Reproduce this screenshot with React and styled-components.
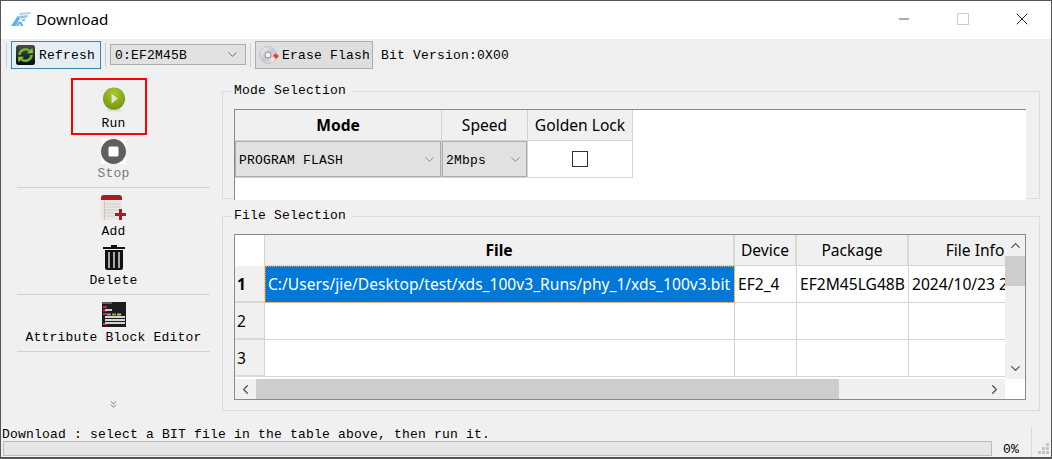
import React from "react";
import styled, { createGlobalStyle } from "styled-components";
import { ChevronDown, ChevronUp, ChevronLeft, ChevronRight, ChevronsDown, Minus, X } from "lucide-react";

const GlobalStyle = createGlobalStyle`
html, body {
  margin: 0;
  padding: 0;
  overflow: hidden;
}
* {
  box-sizing: border-box;
}
`

const MONO = `"Liberation Mono", "DejaVu Sans Mono", monospace`
const UI = `"Noto Sans", "Open Sans", sans-serif`

const Logo = () => (
  <svg width="20" height="14" viewBox="0 0 20 14">
    <path d="M9 1 L20 0 L18.5 2 L8 3 Z" fill="#9fd2f5" />
    <path d="M8 4 L17.5 3 L16 5.5 L9.5 6.5 Z" fill="#8ac6f0" />
    <path d="M10.5 7.5 L15 6.5 L13.5 9 L11.5 9.5 Z" fill="#7fbfee" />
    <path d="M0 14 L7 3.5 L9 6.5 L4.5 14 Z" fill="#5fb0e8" />
    <path d="M5 14 L7.5 10 L10 9.5 L12.5 14 L10 14 L8.5 11.5 L7.5 14 Z" fill="#5fb0e8" />
  </svg>
)

const RefreshIcon = () => (
  <svg width="19" height="20" viewBox="0 0 19 20">
    <defs>
      <linearGradient id="refreshBg" x1="0" y1="0" x2="0" y2="1">
        <stop offset="0" stopColor="#4b4b4b" />
        <stop offset="1" stopColor="#0c0c0c" />
      </linearGradient>
    </defs>
    <rect width="19" height="20" rx="2.5" fill="url(#refreshBg)" />
    <path d="M3.5 10 A6 6 0 0 1 13.5 5.8" fill="none" stroke="#69b52e" strokeWidth="2.6" />
    <path d="M15.5 10 A6 6 0 0 1 5.5 14.2" fill="none" stroke="#69b52e" strokeWidth="2.6" />
    <path d="M11 8.3 L17 8.3 L16.5 2.8 Z" fill="#82c83a" />
    <path d="M8 11.7 L2 11.7 L2.5 17.2 Z" fill="#82c83a" />
  </svg>
)

const EraseIcon = () => (
  <svg width="20" height="20" viewBox="0 0 20 20">
    <defs>
      <linearGradient id="disc" x1="0" y1="0" x2="1" y2="1">
        <stop offset="0" stopColor="#f6f6f6" />
        <stop offset="0.5" stopColor="#c9c6d2" />
        <stop offset="1" stopColor="#ececec" />
      </linearGradient>
    </defs>
    <circle cx="9" cy="10" r="8.5" fill="url(#disc)" stroke="#c4c4c4" />
    <circle cx="9" cy="10" r="3" fill="#f2f2f2" stroke="#8f8f8f" />
    <path d="M11.5 13.5 L16.5 8 L20 11 L15 16.5 Z" fill="#e2452f" />
    <path d="M11.5 13.5 L14 11 L17 14 L15 16.5 L13 16.5 Z" fill="#f7e9e2" />
  </svg>
)

const RunIcon = () => (
  <svg width="24" height="28" viewBox="0 0 24 28">
    <defs>
      <radialGradient id="run" cx="0.5" cy="0.25" r="0.8">
        <stop offset="0" stopColor="#a9c72f" />
        <stop offset="1" stopColor="#6d9312" />
      </radialGradient>
    </defs>
    <ellipse cx="12" cy="24" rx="8" ry="1.5" fill="#d9d9d9" />
    <circle cx="12" cy="12" r="11.5" fill="url(#run)" />
    <path d="M9.5 7 L16 12 L9.5 17 Z" fill="#e4e8c8" />
  </svg>
)

const StopIcon = () => (
  <svg width="25" height="25" viewBox="0 0 25 25">
    <rect width="25" height="25" fill="#fff" />
    <circle cx="12.5" cy="12.5" r="12.5" fill="#5f5f5f" />
    <rect x="7.5" y="7.5" width="10" height="10" rx="1.5" fill="#fff" />
  </svg>
)

const AddIcon = () => (
  <svg width="25" height="27" viewBox="0 0 25 27">
    <rect x="0" y="0" width="21" height="25" rx="3" fill="#e9e7e4" />
    <path d="M0 5 V3 A3 3 0 0 1 3 0 H18 A3 3 0 0 1 21 3 V5 Z" fill="#a81b22" />
    <path d="M3 9 H19 M3 12 H19 M3 15 H19 M3 18 H14 M3 21 H14" stroke="#cfcdca" strokeWidth="1" />
    <path d="M3.5 5 V25" stroke="#e6b9bb" strokeWidth="1" />
    <path d="M14 19.5 H25 M19.5 14 V25" stroke="#a81b22" strokeWidth="3" />
  </svg>
)

const TrashIcon = () => (
  <svg width="22" height="26" viewBox="0 0 22 26">
    <path d="M8 0 H14 V2 H8 Z M0 2 H22 V4 H0 Z" fill="#111" />
    <path d="M2 5 H20 V22.5 A2.5 2.5 0 0 1 17.5 25 H4.5 A2.5 2.5 0 0 1 2 22.5 Z" fill="#111" />
    <path d="M6 7 V23 M11 7 V23 M16 7 V23" stroke="#dcdcdc" strokeWidth="1.5" />
  </svg>
)

const AttributeIcon = () => (
  <svg width="24" height="26" viewBox="0 0 24 26">
    <rect width="24" height="25" fill="#1d1d1d" />
    <rect width="10" height="2" fill="#5c5c5c" />
    <path d="M1 5 H5 M1 8.5 H5 M1 12 H5 M1 22 H5" stroke="#d81b6a" strokeWidth="2" />
    <rect x="3" y="7" width="7" height="2" fill="#c9c9c9" />
    <rect x="5" y="11.5" width="4" height="2" fill="#9c9c9c" />
    <rect x="10" y="11.5" width="4" height="2" fill="#78b83a" />
    <rect x="15" y="11.5" width="4" height="2" fill="#c9c64e" />
    <path d="M3 15 H23 M3 18 H23 M3 21 H23" stroke="#d4d4d4" strokeWidth="2" />
  </svg>
)

const Grip = () => (
  <svg width="12" height="12" viewBox="0 0 12 12" fill="#c4c4c4">
    <rect x="8" y="0" width="3" height="3" />
    <rect x="4" y="4" width="3" height="3" />
    <rect x="8" y="4" width="3" height="3" />
    <rect x="0" y="8" width="3" height="3" />
    <rect x="4" y="8" width="3" height="3" />
    <rect x="8" y="8" width="3" height="3" />
  </svg>
)

const sideItems = [
  { label: "Run", icon: <RunIcon />, marked: true },
  { label: "Stop", icon: <StopIcon />, off: true, line: true },
  { label: "Add", icon: <AddIcon /> },
  { label: "Delete", icon: <TrashIcon />, line: true },
  { label: "Attribute Block Editor", icon: <AttributeIcon />, line: true },
]

export default function App() {
  return (
    <Window>
      <GlobalStyle />
      <TitleBar>
        <Logo />
        <TitleText>Download</TitleText>
        <WindowButtons>
          <WindowButton><Minus size={16} strokeWidth={1} color="#000" /></WindowButton>
          <WindowButton><MaxBox /></WindowButton>
          <WindowButton><X size={20} strokeWidth={1} color="#000" /></WindowButton>
        </WindowButtons>
      </TitleBar>

      <Toolbar>
        <ToolSep />
        <ToolButton $hover><RefreshIcon /><ToolText>Refresh</ToolText></ToolButton>
        <ToolSep />
        <DeviceCombo><ToolText>0:EF2M45B</ToolText><ChevronDown size={15} strokeWidth={1} color="#333" /></DeviceCombo>
        <ToolSep />
        <ToolButton><EraseIcon /><ToolText>Erase Flash</ToolText></ToolButton>
        <BitVersion>Bit Version:0X00</BitVersion>
      </Toolbar>

      <Main>
        <Sidebar>
          {sideItems.map((item) => (
            <React.Fragment key={item.label}>
              <SideButton $marked={item.marked} $off={item.off}>
                {item.icon}
                <span>{item.label}</span>
              </SideButton>
              {item.line && <SideLine />}
            </React.Fragment>
          ))}
          <MoreArrow><ChevronsDown size={11} strokeWidth={1.5} color="#444" /></MoreArrow>
        </Sidebar>

        <Content>
          <ModeGroup>
            <Legend>Mode Selection</Legend>
            <ModeFrame>
              <ModeTable>
                <ModeHead $w={207} $bold>Mode</ModeHead>
                <ModeHead $w={86}>Speed</ModeHead>
                <ModeHead $w={105}>Golden Lock</ModeHead>
                <ModeCell $w={207}>
                  <CellCombo><ToolText>PROGRAM FLASH</ToolText><ChevronDown size={15} strokeWidth={1} color="#555" /></CellCombo>
                </ModeCell>
                <ModeCell $w={86}>
                  <CellCombo><ToolText>2Mbps</ToolText><ChevronDown size={15} strokeWidth={1} color="#555" /></CellCombo>
                </ModeCell>
                <ModeCell $w={105} $center><CheckBox /></ModeCell>
              </ModeTable>
            </ModeFrame>
          </ModeGroup>

          <FileGroup>
            <Legend>File Selection</Legend>
            <FileFrame>
              <FileBody>
                <FileGrid>
                  <Corner />
                  <FileHead $bold>File</FileHead>
                  <FileHead>Device</FileHead>
                  <FileHead>Package</FileHead>
                  <FileHead>File Info</FileHead>

                  <RowHead $bold>1</RowHead>
                  <Cell $selected>C:/Users/jie/Desktop/test/xds_100v3_Runs/phy_1/xds_100v3.bit</Cell>
                  <Cell>EF2_4</Cell>
                  <Cell>EF2M45LG48B</Cell>
                  <Cell>2024/10/23 21:05:36</Cell>

                  <RowHead>2</RowHead>
                  <Cell /><Cell /><Cell /><Cell />

                  <RowHead>3</RowHead>
                  <Cell /><Cell /><Cell /><Cell />
                </FileGrid>
                <VScroll>
                  <ScrollEnd><ChevronUp size={15} strokeWidth={2} color="#555" /></ScrollEnd>
                  <VThumb />
                  <ScrollEnd $end><ChevronDown size={15} strokeWidth={2} color="#555" /></ScrollEnd>
                </VScroll>
              </FileBody>
              <HScroll>
                <ScrollEnd $h><ChevronLeft size={15} strokeWidth={2} color="#555" /></ScrollEnd>
                <HThumb />
                <ScrollEnd $h $end><ChevronRight size={15} strokeWidth={2} color="#555" /></ScrollEnd>
              </HScroll>
            </FileFrame>
          </FileGroup>
        </Content>
      </Main>

      <Message>Download : select a BIT file in the table above, then run it.</Message>
      <StatusBar>
        <Progress />
        <Percent>0%</Percent>
        <StatusSep />
        <GripBox><Grip /></GripBox>
      </StatusBar>
    </Window>
  )
}

const Window = styled.div`
width: 1052px;
height: 459px;
display: flex;
flex-direction: column;
background: #f0f0f0;
border: 1px solid #555;
border-bottom-width: 2px;
overflow: hidden;
font-family: ${MONO};
font-size: 13px;
letter-spacing: 0.2px;
color: #000;
`

const TitleBar = styled.div`
height: 38px;
flex: none;
display: flex;
align-items: center;
padding: 0 0 2px 10px;
background: #fff;
`

const TitleText = styled.span`
margin-left: 5px;
font-family: ${UI};
font-size: 15.2px;
letter-spacing: 0;
`

const WindowButtons = styled.div`
display: flex;
margin-left: auto;
`

const WindowButton = styled.div`
width: 59px;
height: 36px;
display: flex;
align-items: center;
justify-content: center;
`

const MaxBox = styled.div`
width: 12px;
height: 12px;
border: 1px solid #ccc;
`

const Toolbar = styled.div`
height: 31px;
flex: none;
display: flex;
align-items: center;
padding-left: 1px;
background: #efefef;
`

const ToolSep = styled.div`
width: 1px;
height: 24px;
flex: none;
margin: 0 4px;
background: #cfcfcf;
`

const ToolButton = styled.div`
height: 28px;
display: flex;
align-items: center;
gap: ${(p) => (p.$hover ? "4px" : "3px")};
padding: 0 ${(p) => (p.$hover ? "5px" : "2px")} 0 ${(p) => (p.$hover ? "4px" : "3px")};
border: 1px solid ${(p) => (p.$hover ? "#3f83b5" : "#adadad")};
background: ${(p) => (p.$hover ? "#e5eef5" : "#dedede")};
`

const ToolText = styled.span`
padding-top: 2px;
`

const DeviceCombo = styled.div`
width: 136px;
height: 21px;
display: flex;
align-items: center;
justify-content: space-between;
padding: 0 5px 0 4px;
border: 1px solid #adadad;
background: #e1e1e1;
`

const BitVersion = styled.span`
margin-left: 8px;
padding-top: 2px;
`

const Main = styled.div`
flex: 1;
min-height: 0;
display: flex;
`

const Sidebar = styled.div`
width: 221px;
flex: none;
display: flex;
flex-direction: column;
align-items: center;
padding: 8px 12px 0 16px;
`

const SideButton = styled.div`
width: ${(p) => (p.$marked ? "76px" : "100%")};
height: ${(p) => (p.$marked ? "57px" : "auto")};
flex: none;
display: flex;
flex-direction: column;
align-items: center;
padding: ${(p) => (p.$marked ? "7px 0 0 9px" : "4px 0 0")};
margin-right: ${(p) => (p.$marked ? "9px" : "0")};
line-height: 19px;
white-space: nowrap;
border: ${(p) => (p.$marked ? "2px solid #f00" : "none")};
color: ${(p) => (p.$off ? "#7a7a7a" : "#000")};
& > svg {
  display: block;
}
`

const SideLine = styled.div`
width: 100%;
height: 1px;
flex: none;
margin: 4px 0 3px;
background: #d2d2d2;
`

const MoreArrow = styled.div`
margin-top: auto;
height: 25px;
`

const Content = styled.div`
flex: 1;
min-width: 0;
display: flex;
flex-direction: column;
padding-right: 11px;
`

const ModeGroup = styled.fieldset`
height: 116px;
flex: none;
margin: 13px 0 0;
padding: 0 13px 0 11px;
border: 1px solid #dcdcdc;
min-width: 0;
`

const FileGroup = styled.fieldset`
height: 203px;
flex: none;
margin: 9px 0 0;
padding: 0 13px 0 11px;
border: 1px solid #dcdcdc;
min-width: 0;
`

const Legend = styled.legend`
margin-left: -2px;
padding: 0 6px 0 2px;
line-height: 16px;
`

const ModeFrame = styled.div`
height: 91px;
margin-top: 10px;
background: #fff;
border-top: 1px solid #8a8a8a;
border-left: 1px solid #8a8a8a;
overflow: hidden;
`

const ModeTable = styled.div`
width: 398px;
display: flex;
flex-wrap: wrap;
`

const ModeHead = styled.div`
width: ${(p) => p.$w}px;
height: 31px;
display: flex;
align-items: center;
justify-content: center;
font-family: ${UI};
font-size: 15.6px;
letter-spacing: 0;
font-weight: ${(p) => (p.$bold ? 700 : 400)};
background: #f0f0f0;
border-right: 1px solid #d4d4d4;
border-bottom: 1px solid #d4d4d4;
`

const ModeCell = styled.div`
width: ${(p) => p.$w}px;
height: 37px;
display: flex;
align-items: center;
justify-content: ${(p) => (p.$center ? "center" : "stretch")};
border-right: 1px solid #d4d4d4;
border-bottom: 1px solid #d4d4d4;
`

const CellCombo = styled.div`
width: 100%;
height: 100%;
display: flex;
align-items: center;
justify-content: space-between;
padding: 0 3px;
background: #e1e1e1;
border: 1px solid #adadad;
`

const CheckBox = styled.div`
width: 16px;
height: 16px;
background: #fff;
border: 1px solid #333;
`

const FileFrame = styled.div`
height: 166px;
margin-top: 10px;
display: flex;
flex-direction: column;
background: #fff;
border: 1px solid #8a8a8a;
`

const FileBody = styled.div`
flex: 1;
min-height: 0;
display: flex;
`

const FileGrid = styled.div`
flex: 1;
min-width: 0;
overflow: hidden;
display: grid;
grid-template-columns: 30px 470px 62px 112px 134px;
grid-template-rows: 31px 37px 37px 37px;
font-family: ${UI};
font-size: 15.6px;
letter-spacing: 0;
`

const Corner = styled.div`
background: #fff;
border-right: 1px solid #d4d4d4;
`

const FileHead = styled.div`
display: flex;
align-items: center;
justify-content: center;
font-weight: ${(p) => (p.$bold ? 700 : 400)};
background: #f0f0f0;
border-right: 2px solid #d9d9d9;
border-bottom: 1px solid #d4d4d4;
`

const RowHead = styled.div`
display: flex;
align-items: center;
padding-left: 2px;
font-weight: ${(p) => (p.$bold ? 700 : 400)};
background: #f0f0f0;
border-right: 1px solid #d4d4d4;
border-bottom: 2px solid #d9d9d9;
`

const Cell = styled.div`
display: flex;
align-items: center;
padding-left: 3px;
white-space: nowrap;
overflow: hidden;
color: ${(p) => (p.$selected ? "#fff" : "#000")};
background: ${(p) => (p.$selected ? "#0078d7" : "#fff")};
border-right: 1px solid #d4d4d4;
border-bottom: 1px solid #d4d4d4;
outline: ${(p) => (p.$selected ? "1px dotted #e8a33d" : "none")};
outline-offset: -1px;
`

const VScroll = styled.div`
width: 20px;
flex: none;
display: flex;
flex-direction: column;
background: #f0f0f0;
`

const ScrollEnd = styled.div`
width: ${(p) => (p.$h ? "21px" : "100%")};
height: ${(p) => (p.$h ? "100%" : "21px")};
flex: none;
display: flex;
align-items: center;
justify-content: center;
margin-${(p) => (p.$h ? "left" : "top")}: ${(p) => (p.$end ? "auto" : "0")};
`

const VThumb = styled.div`
height: 30px;
background: #cdcdcd;
`

const HScroll = styled.div`
height: 20px;
flex: none;
display: flex;
background: #f0f0f0;
margin-right: 20px;
`

const HThumb = styled.div`
width: 583px;
background: #cdcdcd;
`

const Message = styled.div`
height: 16px;
flex: none;
line-height: 21px;
padding-left: 1px;
white-space: nowrap;
`

const StatusBar = styled.div`
height: 17px;
flex: none;
display: flex;
align-items: center;
padding-left: 2px;
`

const Progress = styled.div`
width: 989px;
height: 15px;
flex: none;
background: #e6e6e6;
border: 1px solid #bcbcbc;
`

const Percent = styled.span`
margin-left: 11px;
width: 28px;
flex: none;
padding-top: 1px;
`

const StatusSep = styled.div`
width: 1px;
height: 30px;
flex: none;
margin-top: -14px;
background: #d9d9d9;
`

const GripBox = styled.div`
margin-left: 6px;
height: 12px;
`
